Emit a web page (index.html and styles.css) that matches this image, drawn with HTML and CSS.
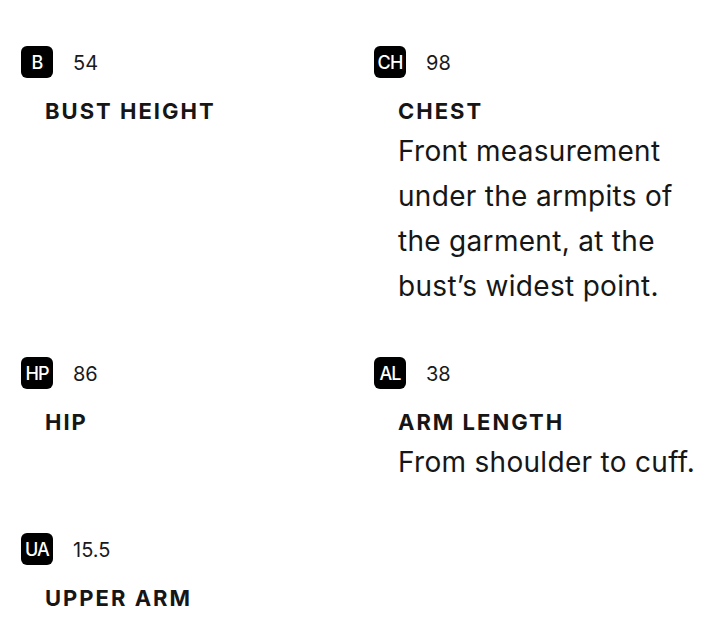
FILE: index.html
```html
<!DOCTYPE html>
<html>
<head>
<meta charset="utf-8">
<link rel="stylesheet" href="styles.css">
</head>
<body>
<div class="grid">
  <div class="item">
    <div class="head"><span class="badge">B</span><span class="num">54</span></div>
    <div class="title">BUST HEIGHT</div>
  </div>
  <div class="item">
    <div class="head"><span class="badge">CH</span><span class="num">98</span></div>
    <div class="title">CHEST</div>
    <div class="desc">Front measurement under the armpits of the garment, at the bust’s widest point.</div>
  </div>
  <div class="item">
    <div class="head"><span class="badge">HP</span><span class="num">86</span></div>
    <div class="title">HIP</div>
  </div>
  <div class="item">
    <div class="head"><span class="badge">AL</span><span class="num">38</span></div>
    <div class="title">ARM LENGTH</div>
    <div class="desc">From shoulder to cuff.</div>
  </div>
  <div class="item">
    <div class="head"><span class="badge">UA</span><span class="num">15.5</span></div>
    <div class="title">UPPER ARM</div>
  </div>
</div>
</body>
</html>
```
FILE: styles.css
```css
html, body {
  margin: 0;
  padding: 0;
  background: #ffffff;
}
body {
  font-family: Inter, "Liberation Sans", sans-serif;
  color: #161616;
}
.grid {
  display: grid;
  grid-template-columns: 353px 353px;
  row-gap: 48px;
  padding: 46px 0 0 21px;
}
.item {
  display: flex;
  flex-direction: column;
}
.head {
  display: flex;
  align-items: center;
  gap: 20px;
  height: 32px;
}
.badge {
  width: 32px;
  height: 32px;
  border-radius: 6px;
  background: #000;
  color: #fff;
  font-family: Inter, "Liberation Sans", sans-serif;
  font-size: 18px;
  font-weight: 500;
  display: flex;
  align-items: center;
  justify-content: center;
  letter-spacing: -0.9px;
}
.num {
  font-size: 20px;
  line-height: 24px;
  color: #1a1a1a;
  position: relative;
  top: 1px;
}
.title {
  margin: 21px 0 0 24px;
  font-size: 22px;
  line-height: 24px;
  font-weight: 700;
  letter-spacing: 2px;
  color: #161616;
}
.desc {
  margin: 6px 0 0 24px;
  max-width: 306px;
  font-size: 28px;
  line-height: 45px;
  letter-spacing: 0.3px;
  color: #161616;
}
```
